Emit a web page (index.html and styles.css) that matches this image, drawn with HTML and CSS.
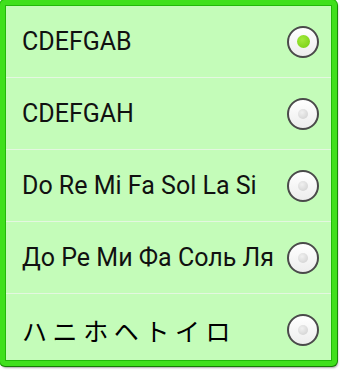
FILE: index.html
```html
<!DOCTYPE html>
<html lang="en">
<head>
  <meta charset="UTF-8" />
  <title>Scales</title>
  <link rel="stylesheet" href="styles.css">
</head>
<body>
  <div class="frame">
    <ul class="list">
      <li class="row">
        <span class="label">CDEFGAB</span>
        <span class="radio checked"></span>
      </li>
      <li class="row">
        <span class="label">CDEFGAH</span>
        <span class="radio"></span>
      </li>
      <li class="row">
        <span class="label">Do Re Mi Fa Sol La Si</span>
        <span class="radio"></span>
      </li>
      <li class="row">
        <span class="label">До Ре Ми Фа Соль Ля</span>
        <span class="radio"></span>
      </li>
      <li class="row">
        <span class="label jp">ハ ニ ホ ヘ ト イ ロ</span>
        <span class="radio"></span>
      </li>
    </ul>
  </div>
</body>
</html>
```

FILE: styles.css
```css
:root {
  --frame: #3fe01c;
  --frame-dark: #22b80a;
  --fill: #c4fcb9;
  --divider: #e4f7e0;
  --text: #111;
}

html, body {
  margin: 0;
  background: #fff;
}

body {
  width: 340px;
  height: 370px;
  overflow: hidden;
  font-family: Roboto, "Noto Sans", sans-serif;
}

.frame {
  box-sizing: border-box;
  width: 337px;
  height: 366px;
  border: 5px solid var(--frame);
  border-radius: 5px;
  background: var(--fill);
  box-shadow: 0 0 0 1px var(--frame-dark) inset, 1px 2px 2px rgba(0,0,0,0.35), 0 0 0 1px var(--frame-dark);
  overflow: hidden;
}

.list {
  list-style: none;
  margin: 0;
  padding: 1px 0 0;
}

.row {
  display: flex;
  align-items: center;
  justify-content: space-between;
  height: 71px;
  padding: 0 12px 0 16px;
  border-bottom: 1px solid var(--divider);
  margin: 0 1px;
}

.label {
  font-size: 25px;
  color: var(--text);
  white-space: nowrap;
}

.label.jp {
  font-family: "Noto Sans CJK JP", sans-serif;
  font-size: 25px;
  color: #000;
}

.radio {
  position: relative;
  width: 28px;
  height: 28px;
  border: 2px solid #4a4a4a;
  border-radius: 50%;
  background: linear-gradient(#fff, #ededed);
  flex-shrink: 0;
}

.radio::after {
  content: "";
  position: absolute;
  left: 50%;
  top: 50%;
  width: 10px;
  height: 10px;
  margin: -5px 0 0 -5px;
  border-radius: 50%;
  background: radial-gradient(circle at 40% 35%, #f0f0f0, #cdcdcd);
}

.radio.checked::after {
  width: 13px;
  height: 13px;
  margin: -6.5px 0 0 -6.5px;
  background: radial-gradient(circle at 40% 35%, #a2ea3c, #74cc10);
}
```
